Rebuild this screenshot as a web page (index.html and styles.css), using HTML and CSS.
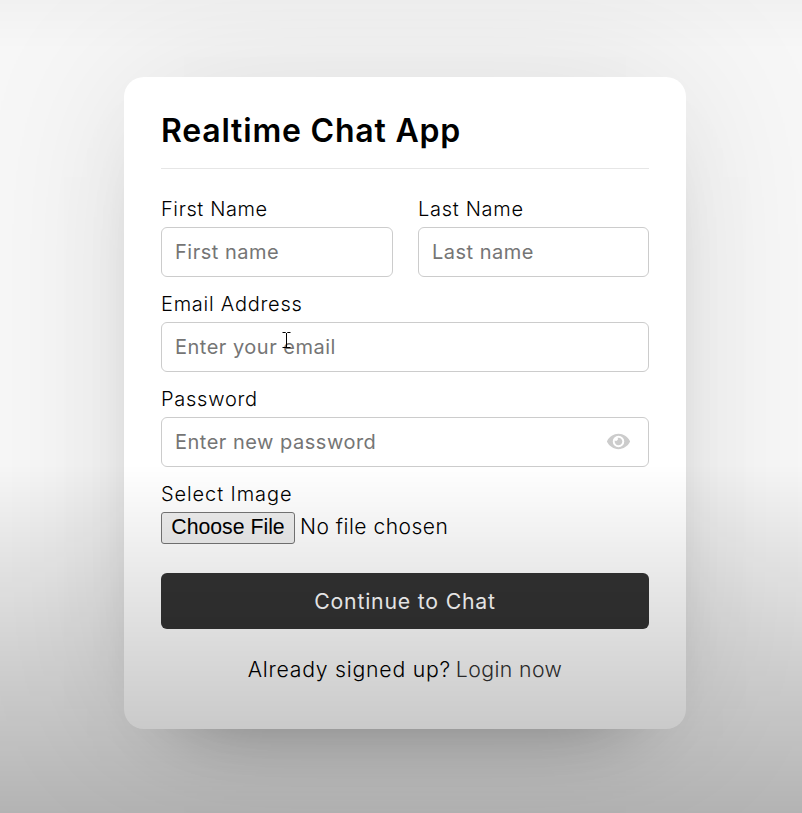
FILE: index.html
```html
<!DOCTYPE html>
<html lang="en">
<head>
<meta charset="UTF-8">
<title>Realtime Chat App</title>
<link rel="stylesheet" href="styles.css">
</head>
<body>
<main class="wrapper">
  <header class="title">Realtime Chat App</header>
  <form class="form">
    <div class="names">
      <div class="field">
        <label class="label first" for="fname">First Name</label>
        <input class="input" id="fname" type="text" placeholder="First name">
      </div>
      <div class="field">
        <label class="label last" for="lname">Last Name</label>
        <input class="input" id="lname" type="text" placeholder="Last name">
      </div>
    </div>
    <div class="field">
      <label class="label email" for="email">Email Address</label>
      <input class="input" id="email" type="text" placeholder="Enter your email">
      <svg class="cursor" viewBox="0 0 9 17" aria-hidden="true"><path d="M0.5 .5H3.5L4.5 1.5L5.5 .5H8.5M4.5 1V16M.5 15.5H8.5"/></svg>
    </div>
    <div class="field">
      <label class="label pass" for="password">Password</label>
      <input class="input" id="password" type="password" placeholder="Enter new password">
      <svg class="eye" viewBox="0 0 576 512" aria-hidden="true"><path d="M572.52 241.4C518.29 135.59 410.93 64 288 64S57.68 135.64 3.48 241.41a32.35 32.35 0 0 0 0 29.19C57.71 376.41 165.07 448 288 448s230.32-71.64 284.52-177.41a32.35 32.35 0 0 0 0-29.19zM288 400a144 144 0 1 1 144-144 143.93 143.93 0 0 1-144 144zm0-240a95.31 95.31 0 0 0-25.31 3.79 47.85 47.85 0 0 1-66.9 66.9A95.78 95.78 0 1 0 288 160z"/></svg>
    </div>
    <div class="field image-field">
      <label class="label image" for="image">Select Image</label>
      <input class="file" id="image" type="file">
    </div>
    <button class="submit" type="button">Continue to Chat</button>
  </form>
  <p class="link"><span class="ask">Already signed up?</span><a class="login" href="#">Login now</a></p>
</main>
<div class="shade"></div>
</body>
</html>
```
FILE: styles.css
```css
* {
  box-sizing: border-box;
  margin: 0;
  padding: 0;
}

body {
  height: 813px;
  overflow: hidden;
  background: #f7f7f7;
  font-family: Inter, sans-serif;
  font-weight: 350;
  color: #000;
  padding: 77px 0 0 124px;
}

.wrapper {
  width: 562px;
  height: 652px;
  padding: 30px 37px 0;
  border-radius: 20px;
  background: #fff;
  box-shadow: 0 0 160px rgba(0, 0, 0, .1), 0 40px 80px -60px rgba(0, 0, 0, .5);
}

.title {
  height: 62px;
  line-height: 48px;
  font-size: 32px;
  font-weight: 600;
  letter-spacing: .8px;
  border-bottom: 1px solid #e6e6e6;
}

.form {
  padding-top: 26px;
}

.names {
  display: grid;
  grid-template-columns: 232px 231px;
  column-gap: 25px;
}

.field {
  position: relative;
  height: 95px;
}

.label {
  display: block;
  height: 32px;
  line-height: 29px;
  font-size: 20px;
  white-space: nowrap;
}

.first {
  letter-spacing: .6px;
}

.last {
  letter-spacing: .7px;
}

.email {
  letter-spacing: .75px;
}

.pass {
  letter-spacing: .75px;
}

.image {
  letter-spacing: .9px;
}

.input {
  display: block;
  width: 100%;
  height: 50px;
  padding: 0 13px;
  border: 1px solid #ccc;
  border-radius: 6px;
  background: transparent;
  font: 400 20px Inter, sans-serif;
  letter-spacing: .5px;
  outline: none;
}

.input::placeholder {
  color: #757575;
}

.cursor {
  position: absolute;
  left: 121px;
  top: 42px;
  width: 9px;
  height: 17px;
  fill: none;
  stroke: #000;
}

.eye {
  position: absolute;
  right: 19px;
  top: 46px;
  width: 23px;
  height: 21px;
  fill: #ccc;
}

.image-field {
  height: 93px;
}

.file {
  display: block;
  width: 100%;
  height: 34px;
  margin-top: -2px;
  font: 350 21px/34px Inter, sans-serif;
  letter-spacing: .5px;
}

.file::file-selector-button {
  width: 134px;
  height: 32px;
  margin-right: 5px;
  border: 1px solid #767676;
  border-radius: 3px;
  background: #efefef;
  color: #000;
  font: 21.25px "Liberation Sans", sans-serif;
  letter-spacing: 0;
}

.submit {
  display: block;
  width: 100%;
  height: 56px;
  border: 0;
  border-radius: 6px;
  background: #333;
  color: #fff;
  font: 400 21.25px Inter, sans-serif;
  letter-spacing: .8px;
}

.link {
  display: flex;
  justify-content: center;
  gap: 5px;
  margin-top: 24px;
  line-height: 32px;
  font-size: 21.25px;
}

.ask {
  letter-spacing: .75px;
}

.login {
  color: #333;
  letter-spacing: .4px;
  text-decoration: none;
}

.shade {
  position: fixed;
  inset: 0;
  pointer-events: none;
  background:
    linear-gradient(rgba(0, 0, 0, .025), transparent 50px),
    linear-gradient(transparent 465px, rgba(0, 0, 0, .275));
}
```
